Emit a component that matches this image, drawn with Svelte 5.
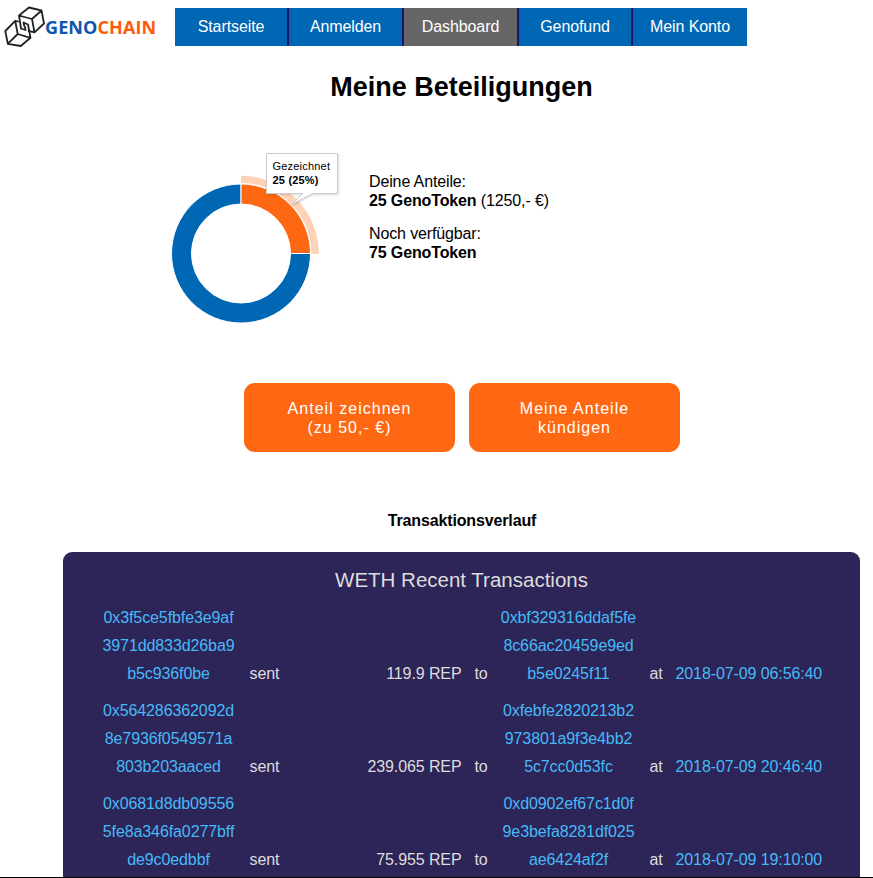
<script>
  const tabs = ['Startseite', 'Anmelden', 'Dashboard', 'Genofund', 'Mein Konto'];
  const active = 'Dashboard';
  const rows = [
    { from: ['0x3f5ce5fbfe3e9af', '3971dd833d26ba9', 'b5c936f0be'], amount: '119.9 REP', to: ['0xbf329316ddaf5fe', '8c66ac20459e9ed', 'b5e0245f11'], at: '2018-07-09 06:56:40' },
    { from: ['0x564286362092d', '8e7936f0549571a', '803b203aaced'], amount: '239.065 REP', to: ['0xfebfe2820213b2', '973801a9f3e4bb2', '5c7cc0d53fc'], at: '2018-07-09 20:46:40' },
    { from: ['0x0681d8db09556', '5fe8a346fa0277bff', 'de9c0edbbf'], amount: '75.955 REP', to: ['0xd0902ef67c1d0f', '9e3befa8281df025', 'ae6424af2f'], at: '2018-07-09 19:10:00' }
  ];
</script>

<div class="page">
  <header>
    <div class="logo">
      <svg class="cubes" width="44" height="48" viewBox="2 0 44 48" fill="none" stroke="#222" stroke-width="1.800" stroke-linejoin="round" stroke-linecap="round">
        <path d="M19 15.500 29 7.500 41.500 10.500 44 23.500 34.500 32.300 28.500 30.800M19 15.500 32 19 41.500 10.500M32 19 34.500 32.300M19 15.500 21 28.500 25.500 30 25 27" />
        <path d="M18 21.500 15.200 20.800 5.300 31 7.800 43.800 20.800 46 30.500 37.800 28 24.500 23.500 22.500 24.300 26M30.500 37.800 17.700 34 7.800 43.800M17.700 34 15.200 20.800" />
      </svg>
      <span class="word"><span class="geno">GENO</span><span class="chain">CHAIN</span></span>
    </div>
    <nav>
      {#each tabs as tab}
        <a class:active={tab === active}>{tab}</a>
      {/each}
    </nav>
  </header>

  <main>
    <h1>Meine Beteiligungen</h1>

    <section class="shares">
      <svg class="donut" width="180" height="190" viewBox="160 145 180 190">
        <path d="M241 175.800A77.700 77.700 0 0 1 318.700 253.500V254H311.500V253.500A70.500 70.500 0 0 0 241 183Z" fill="#ffd1b7" />
        <path d="M241 184A69.500 69.500 0 1 0 310.500 253.500H290.500A49.500 49.500 0 1 1 241 204Z" fill="#0067b5" stroke="#fff" />
        <path d="M241 184A69.500 69.500 0 0 1 310.500 253.500H290.500A49.500 49.500 0 0 0 241 204Z" fill="#ff6813" stroke="#fff" />
        <path class="bubble" d="M267 153.500H337Q337.500 153.500 337.500 154V193.500H312.500L291.500 204.500 302.500 193.500H266.500V154Q266.500 153.500 267 153.500Z" fill="#fff" stroke="#ccc" />
        <g class="tip">
          <text x="272.500" y="170" textLength="57.500">Gezeichnet</text>
          <text x="272.500" y="184" font-weight="bold" textLength="46">25 (25%)</text>
        </g>
      </svg>
      <div class="summary">
        <p>Deine Anteile:<br /><b>25 GenoToken</b> (1250,- €)</p>
        <p>Noch verfügbar:<br /><b>75 GenoToken</b></p>
      </div>
    </section>

    <div class="buttons">
      <button>Anteil zeichnen<br />(zu 50,- €)</button>
      <button>Meine Anteile<br />kündigen</button>
    </div>

    <h2>Transaktionsverlauf</h2>

    <section class="panel">
      <h3>WETH Recent Transactions</h3>
      {#each rows as row}
        <div class="row">
          <a class="hash">{#each row.from as part}<span>{part}</span>{/each}</a>
          <span class="sent">sent</span>
          <span class="amount">{row.amount}</span>
          <span class="to">to</span>
          <a class="hash">{#each row.to as part}<span>{part}</span>{/each}</a>
          <span class="at">at</span>
          <a class="time">{row.at}</a>
        </div>
      {/each}
    </section>
  </main>
</div>

<style>
  .page {
    box-sizing: border-box;
    width: 873px;
    height: 878px;
    overflow: hidden;
    background: #fff;
    border-bottom: 1px solid #000;
    font: 16px/19px 'Liberation Sans', Arial, sans-serif;
    color: #000;
  }
  header { display: flex; height: 54px; }
  .logo { display: flex; width: 175px; }
  .cubes { flex: none; margin-left: 2px; }
  .word {
    margin: 14px 0 0 -1px;
    font: 700 18px/26px 'Open Sans', sans-serif;
    letter-spacing: 0.1px;
    white-space: nowrap;
  }
  .geno { color: #0e55ae; }
  .chain { color: #ff5a0c; }
  nav {
    display: grid;
    grid-template-columns: 112px 113px 113px 112px 114px;
    gap: 2px;
    height: 38px;
    margin-top: 8px;
    background: #1b1464;
  }
  nav a { background: #0067b5; color: #fff; text-align: center; line-height: 37px; letter-spacing: -0.1px; }
  nav a.active { background: #666; }
  main { width: 797px; margin-left: 63px; }
  h1 { margin: 0; height: 91px; padding-top: 17px; box-sizing: border-box; font-size: 27px; line-height: 33px; text-align: center; }
  .shares { display: flex; height: 238px; padding-left: 97px; }
  .donut { flex: none; }
  .bubble { filter: drop-shadow(1px 1px 1px rgba(0, 0, 0, 0.15)); }
  .tip { font-size: 11px; fill: #000; }
  .summary { margin: 27px 0 0 29px; letter-spacing: -0.13px; }
  .summary p { margin: 0 0 14px; }
  .buttons { display: flex; justify-content: center; gap: 14px; height: 69px; }
  button {
    width: 211px;
    padding: 0 0 0 1px;
    border: 0;
    border-radius: 11px;
    background: #ff6813;
    color: #fff;
    font: inherit;
    letter-spacing: 1.02px;
  }
  h2 { margin: 59px 0 22px; padding-left: 1px; font-size: 16px; line-height: 19px; letter-spacing: -0.14px; text-align: center; }
  .panel {
    height: 340px;
    border-radius: 9px 9px 0 0;
    background: #2d2457;
    color: #ddd;
    line-height: 28px;
  }
  h3 { margin: 0; padding: 14px 0 10px; font-size: 20.5px; line-height: 28px; font-weight: 400; text-align: center; }
  .row {
    display: grid;
    grid-template-columns: 150px 42px 176px 32px 150px 32px 160px;
    align-items: end;
    margin: 0 0 9px 30.5px;
    letter-spacing: -0.1px;
    white-space: nowrap;
  }
  .row a { color: #46baf8; }
  .hash span { display: block; text-align: center; }
  .sent, .at { padding-left: 6px; }
  .amount { text-align: right; }
  .to { padding-left: 13px; }
</style>
